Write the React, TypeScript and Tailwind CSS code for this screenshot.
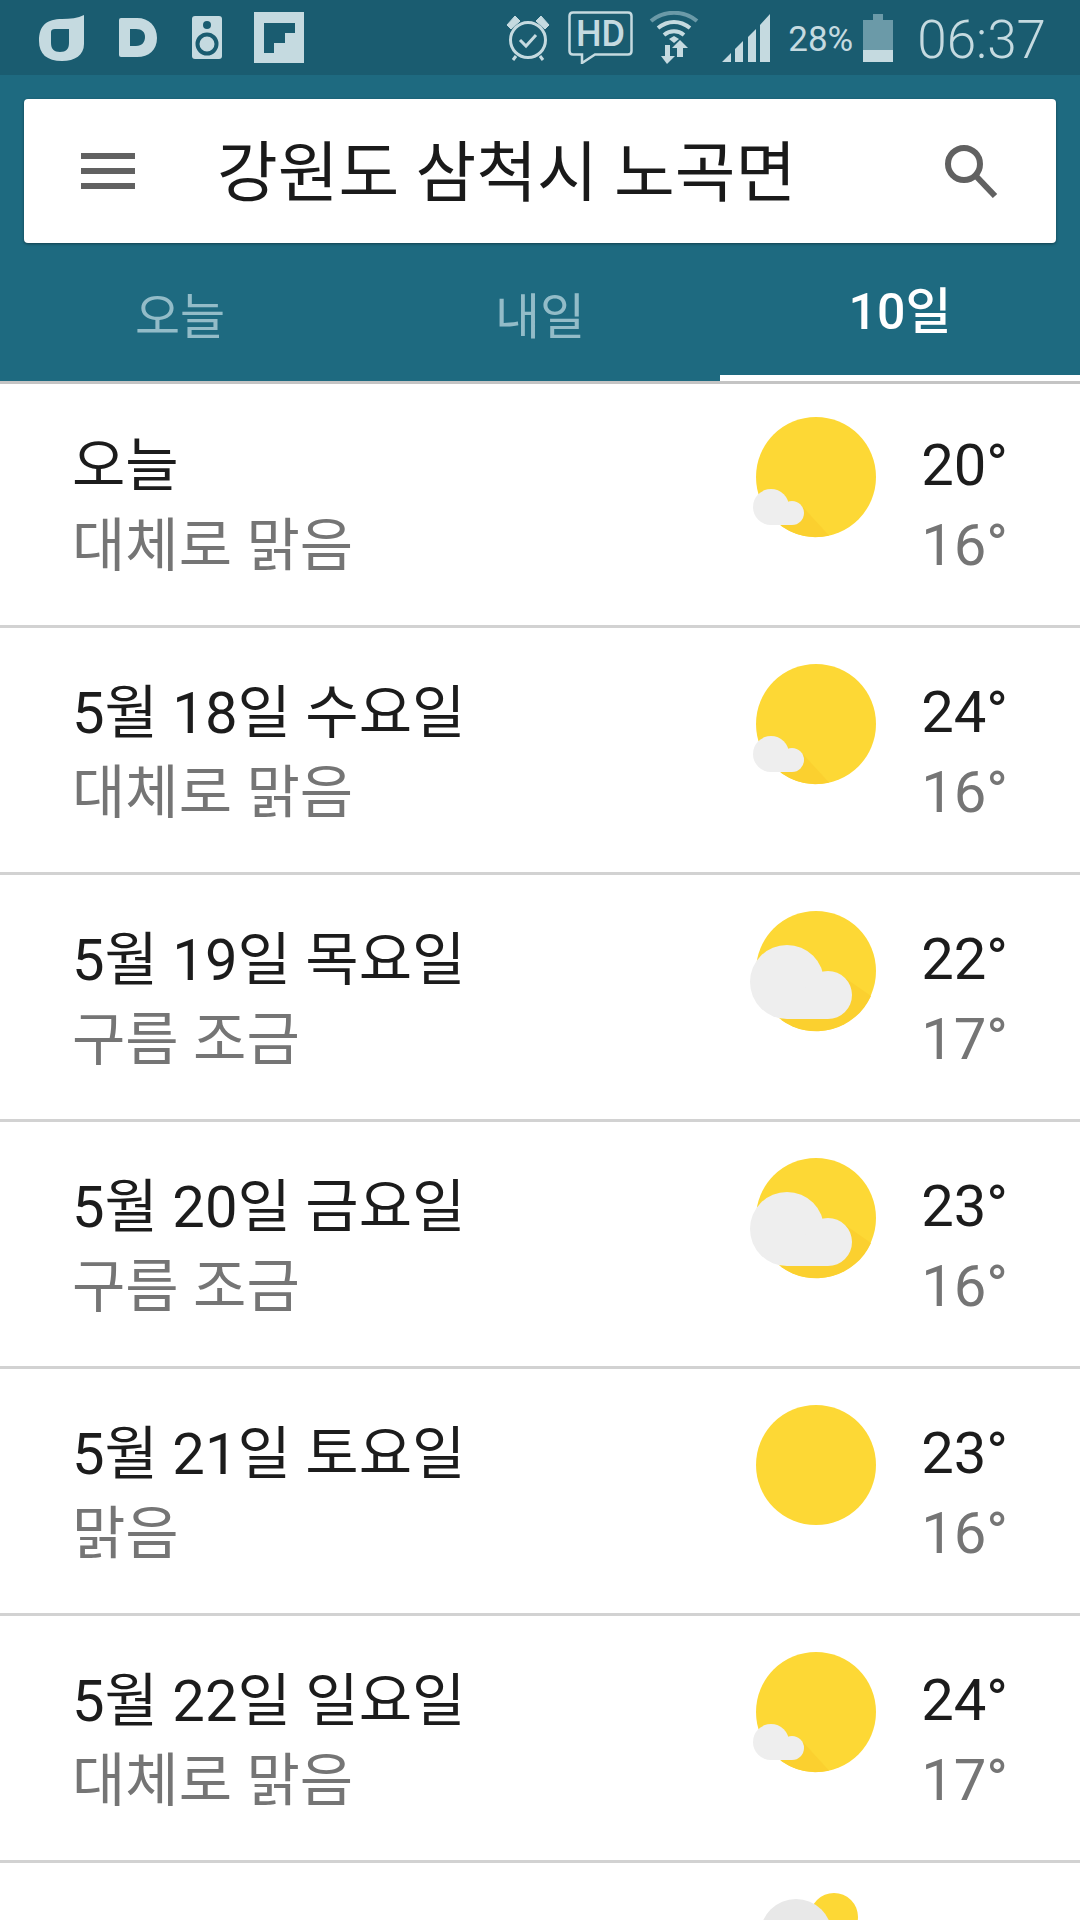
const KR = "font-['Roboto','Noto_Sans_CJK_KR',sans-serif]";

type Sky = "mostly" | "partly" | "clear";

const days: { title: string; sub: string; hi: string; lo: string; sky: Sky }[] = [
  { title: "오늘", sub: "대체로 맑음", hi: "20°", lo: "16°", sky: "mostly" },
  { title: "5월 18일 수요일", sub: "대체로 맑음", hi: "24°", lo: "16°", sky: "mostly" },
  { title: "5월 19일 목요일", sub: "구름 조금", hi: "22°", lo: "17°", sky: "partly" },
  { title: "5월 20일 금요일", sub: "구름 조금", hi: "23°", lo: "16°", sky: "partly" },
  { title: "5월 21일 토요일", sub: "맑음", hi: "23°", lo: "16°", sky: "clear" },
  { title: "5월 22일 일요일", sub: "대체로 맑음", hi: "24°", lo: "17°", sky: "mostly" },
];

function WeatherIcon({ sky }: { sky: Sky }) {
  return (
    <svg width="130" height="124" viewBox="0 0 130 124" className="mb-[52px] shrink-0 overflow-visible">
      <circle cx="65" cy="62" r="60" fill="#fdd835" />
      {sky === "mostly" && (
        <g>
          <path d="M50 90 L78 120.6 A60 60 0 0 1 30 110.8 Z" fill="#fbd02f" />
          <g fill="#eeeeee">
            <circle cx="20" cy="92" r="18" />
            <circle cx="41" cy="98" r="12" />
            <rect x="20" y="92" width="21" height="18" />
          </g>
        </g>
      )}
      {sky === "partly" && (
        <g>
          <path d="M94 69 L120 87 A60 60 0 0 1 30 110.8 Z" fill="#fbd02f" />
          <g fill="#eeeeee">
            <circle cx="36" cy="73" r="37" />
            <circle cx="77" cy="86" r="24" />
            <rect x="36" y="80" width="41" height="30" />
          </g>
        </g>
      )}
    </svg>
  );
}

function StatusBar() {
  return (
    <div className="flex h-[75px] items-center justify-between bg-[#1a5c70] pl-[38px] pr-[34px] text-[#c5dae0]">
      <div className="flex items-center">
        <svg width="48" height="48" viewBox="0 0 48 48">
          <path
            d="M46 1 V30 C46 41 37 47 24 47 C9 47 1 40 1 27 C1 11 9 5 24 5 C32 5 40 4 46 1 Z M13 18 Q13 15 17 15 H31 V29 C31 35 28 38 22 38 C16 38 13 35 13 29 Z"
            fill="#c5dae0"
            fillRule="evenodd"
          />
        </svg>
        <svg width="38" height="40" viewBox="0 0 38 40" className="ml-[33px]">
          <path
            d="M0 2 Q0 0 2 0 L18 0 C30 0 38 8 38 20 C38 32 30 39 18 39 L2 39 Q0 39 0 37 Z M11 11 L11 28 L17 28 C23 28 26 24 26 19 C26 14 23 11 17 11 Z"
            fill="#c5dae0"
            fillRule="evenodd"
          />
        </svg>
        <svg width="30" height="44" viewBox="0 0 30 44" className="ml-[35px]">
          <rect width="30" height="43" rx="3" fill="#c5dae0" />
          <circle cx="15" cy="9" r="4" fill="#1a5c70" />
          <circle cx="15" cy="28" r="9.5" fill="none" stroke="#1a5c70" strokeWidth="4" />
        </svg>
        <svg width="50" height="51" viewBox="0 0 50 51" className="ml-[32px]">
          <rect width="50" height="51" fill="#c5dae0" />
          <path d="M10 11 H41 V21 H31 V31 H20 V41 H10 Z" fill="#1a5c70" />
        </svg>
      </div>
      <div className="flex items-center">
        <svg width="46" height="46" viewBox="0 0 46 46" fill="none" stroke="#c5dae0">
          <circle cx="23" cy="25" r="17.5" strokeWidth="3" />
          <path d="M15 25 L21 31 L31 20" strokeWidth="3" />
          <path d="M2 10 L10 1 L15 6 L6 14 Z M44 10 L36 1 L31 6 L40 14 Z" fill="#c5dae0" strokeWidth="1" />
          <path d="M11 41 L8 45 M35 41 L38 45" strokeWidth="3" />
        </svg>
        <svg width="65" height="53" viewBox="0 0 65 53" fill="none" className="ml-[17px]">
          <path
            d="M5 1.5 H60 Q63.5 1.5 63.5 5 V40 Q63.5 43.5 60 43.5 H27 L14 52 V43.5 H5 Q1.5 43.5 1.5 40 V5 Q1.5 1.5 5 1.5 Z"
            stroke="#c5dae0"
            strokeWidth="2.5"
          />
          <text x="32.5" y="35" textAnchor="middle" fill="#c5dae0" className="font-['Roboto',sans-serif] text-[36px] font-medium">
            HD
          </text>
        </svg>
        <svg width="50" height="53" viewBox="0 0 50 53" fill="none" className="ml-[16px]">
          <path d="M2 10 C15 -1 35 -1 48 10" stroke="#6b9aa8" strokeWidth="4" />
          <path d="M9 17 C19 9 31 9 41 17" stroke="#c5dae0" strokeWidth="4" />
          <path d="M15 24 C21 19 29 19 35 24" stroke="#c5dae0" strokeWidth="4" />
          <path d="M20 28 L25 25 L30 28 L25 32 Z" fill="#c5dae0" />
          <path d="M16 34 H21 V45 H26 L18 53 L12 45 H16 Z M28 46 V37 H23 L31 29 L39 37 H34 V46 Z" fill="#c5dae0" />
        </svg>
        <svg width="48" height="48" viewBox="0 0 48 48" className="ml-[23px]">
          <path d="M0 48 L9 39 V48 Z M13 35 L21 27 V48 H13 Z M26 23 L34 15 V48 H26 Z M38 11 L48 0 V48 H38 Z" fill="#c5dae0" />
        </svg>
        <span className={`ml-[18px] pt-[3px] ${KR} text-[35px] leading-none`}>28%</span>
        <div className="ml-[10px] flex w-[30px] flex-col items-center">
          <div className="h-[6px] w-[10px] bg-[#6b9aa8]" />
          <div className="h-[30px] w-full bg-[#6b9aa8]" />
          <div className="h-[12px] w-full bg-[#c5dae0]" />
        </div>
        <span className={`ml-[24px] pt-[6px] ${KR} text-[53px] font-light leading-none`}>06:37</span>
      </div>
    </div>
  );
}

function Header() {
  return (
    <div className="bg-[#1e6a80]">
      <div className="px-6 pt-6">
        <div className="flex h-[144px] items-center rounded-[4px] bg-white pl-[57px] pr-[58px] shadow-[0_1px_3px_rgba(0,0,0,0.4)]">
          <svg width="54" height="36" viewBox="0 0 54 36" className="shrink-0">
            <path d="M0 0 H54 V6 H0 Z M0 15 H54 V21 H0 Z M0 30 H54 V36 H0 Z" fill="#616161" />
          </svg>
          <span className={`ml-[82px] flex-1 pt-[6px] ${KR} text-[66px] leading-none text-[#1a1a1a]`}>강원도 삼척시 노곡면</span>
          <svg width="54" height="54" viewBox="0 0 54 54" fill="none" stroke="#616161" strokeWidth="6" className="shrink-0">
            <circle cx="20" cy="20" r="16" />
            <path d="M31 31 L51 52" />
          </svg>
        </div>
      </div>
      <div className={`grid h-[138px] grid-cols-3 ${KR}`}>
        <div className="flex items-center justify-center pt-[12px] text-[49px] text-[#93bcc8]">오늘</div>
        <div className="flex items-center justify-center pt-[12px] text-[49px] text-[#93bcc8]">내일</div>
        <div className="flex items-center justify-center border-b-[6px] border-white pt-[6px] text-[50px] font-medium text-white">10일</div>
      </div>
    </div>
  );
}

function DayRow({ title, sub, hi, lo, sky }: (typeof days)[number]) {
  return (
    <div className="flex h-[247px] items-center border-b-[3px] border-[#d2d2d2] pl-[72px] pr-[72px]">
      <div className={`flex-1 pt-[6px] ${KR}`}>
        <div className="text-[58px] leading-[80px] text-[#1c1c1c]">{title}</div>
        <div className="text-[58px] leading-[80px] text-[#757575]">{sub}</div>
      </div>
      <WeatherIcon sky={sky} />
      <div className={`ml-[36px] w-[91px] pt-[3px] text-right ${KR}`}>
        <div className="text-[58px] leading-[80px] text-[#1c1c1c]">{hi}</div>
        <div className="text-[58px] leading-[80px] text-[#757575]">{lo}</div>
      </div>
    </div>
  );
}

export default function App() {
  return (
    <div className="h-[1920px] w-[1080px] overflow-hidden bg-white">
      <StatusBar />
      <Header />
      <div className="h-[3px] bg-[#c4c4c4]" />
      <div className="-mt-[3px]">
        {days.map((d) => (
          <DayRow key={d.title} {...d} />
        ))}
      </div>
      <div className="flex justify-end pr-[215px] pt-[30px]">
        <svg width="110" height="40" viewBox="0 0 110 40">
          <circle cx="79" cy="24" r="24" fill="#fdd835" />
          <circle cx="41" cy="42" r="36" fill="#e8e8e8" />
        </svg>
      </div>
    </div>
  );
}
